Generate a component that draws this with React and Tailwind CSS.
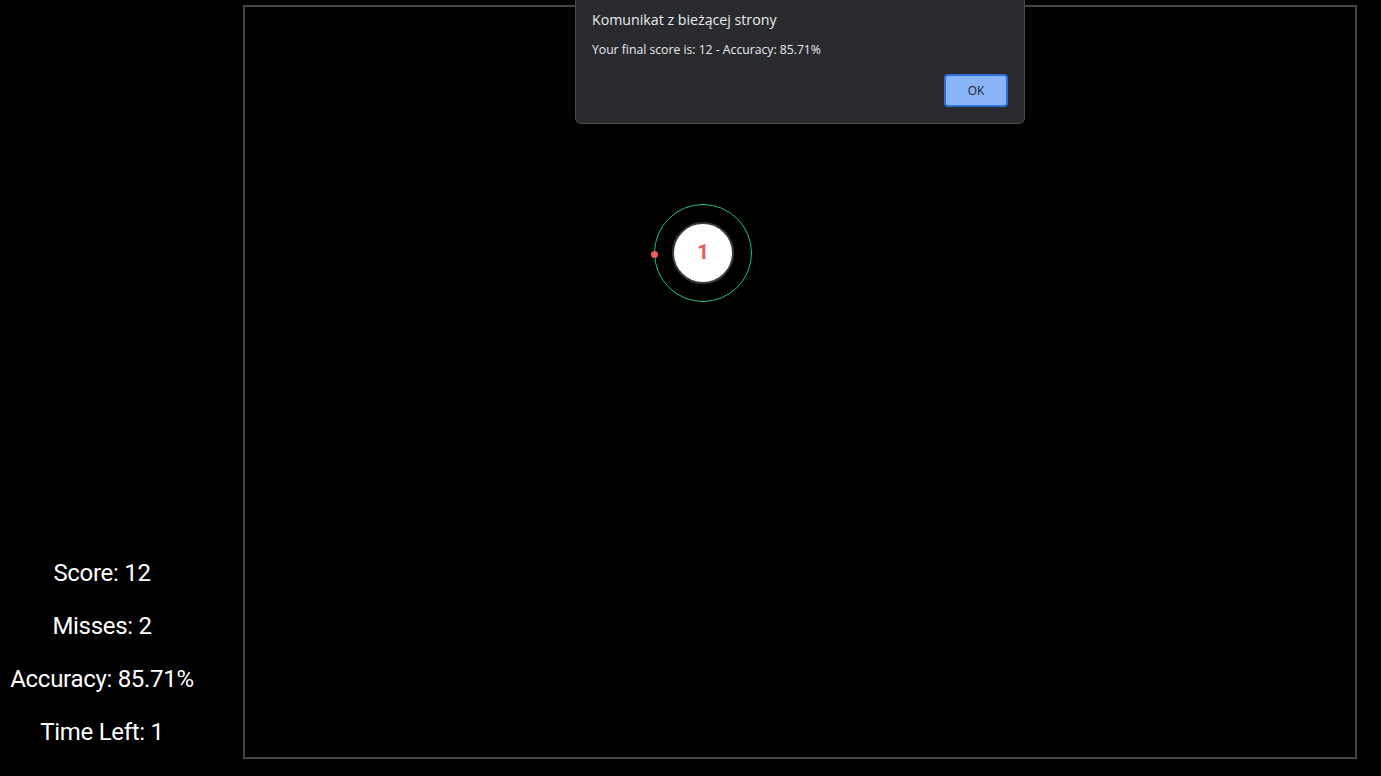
export default function App() {
  const stats = ["Score: 12", "Misses: 2", "Accuracy: 85.71%", "Time Left: 1"];
  return (
    <div className="relative flex h-[776px] w-[1381px] overflow-hidden bg-black" style={{ fontFamily: "Roboto, sans-serif" }}>
      <div className="flex w-[204px] shrink-0 flex-col justify-end pb-[29px]">
        {stats.map((s) => (
          <div key={s} className="mt-[24px] text-center text-[24px] leading-[29px] tracking-[-0.3px] text-white">
            {s}
          </div>
        ))}
      </div>
      <div className="ml-[39px] mt-[5px] h-[754px] w-[1114px] border-2 border-[#444444]">
        <div className="relative h-full w-full">
          <div className="absolute left-[409px] top-[197px] h-[98px] w-[98px] rounded-full border-[1.5px] border-[#22c47d]" />
          <div className="absolute left-[406px] top-[244px] h-[7px] w-[7px] rounded-full bg-[#f05a5a]" />
          <div className="absolute left-[427px] top-[215px] flex h-[62px] w-[62px] items-center justify-center rounded-full border-2 border-[#3a3a3a] bg-white">
            <span className="text-[21px] font-extrabold text-[#e8605e]">1</span>
          </div>
        </div>
      </div>
      <div
        className="absolute left-[575px] top-[-4px] h-[128px] w-[450px] rounded-b-[6px] border border-[#4a4a4e] bg-[#292a2d] px-[16px] pt-[13px]"
        style={{ fontFamily: "'Segoe UI', 'Open Sans', sans-serif" }}
      >
        <div className="text-[14.2px] leading-[20px] text-[#e8eaed]">Komunikat z bieżącej strony</div>
        <div className="mt-[12px] text-[12.2px] leading-[16px] text-[#e8eaed]">Your final score is: 12 - Accuracy: 85.71%</div>
        <div className="mt-[16px] flex justify-end">
          <button className="h-[33px] w-[64px] rounded-[4px] border-2 border-[#2b6fd6] bg-[#8ab4f8] text-[12px] text-[#202124]">
            OK
          </button>
        </div>
      </div>
    </div>
  );
}
